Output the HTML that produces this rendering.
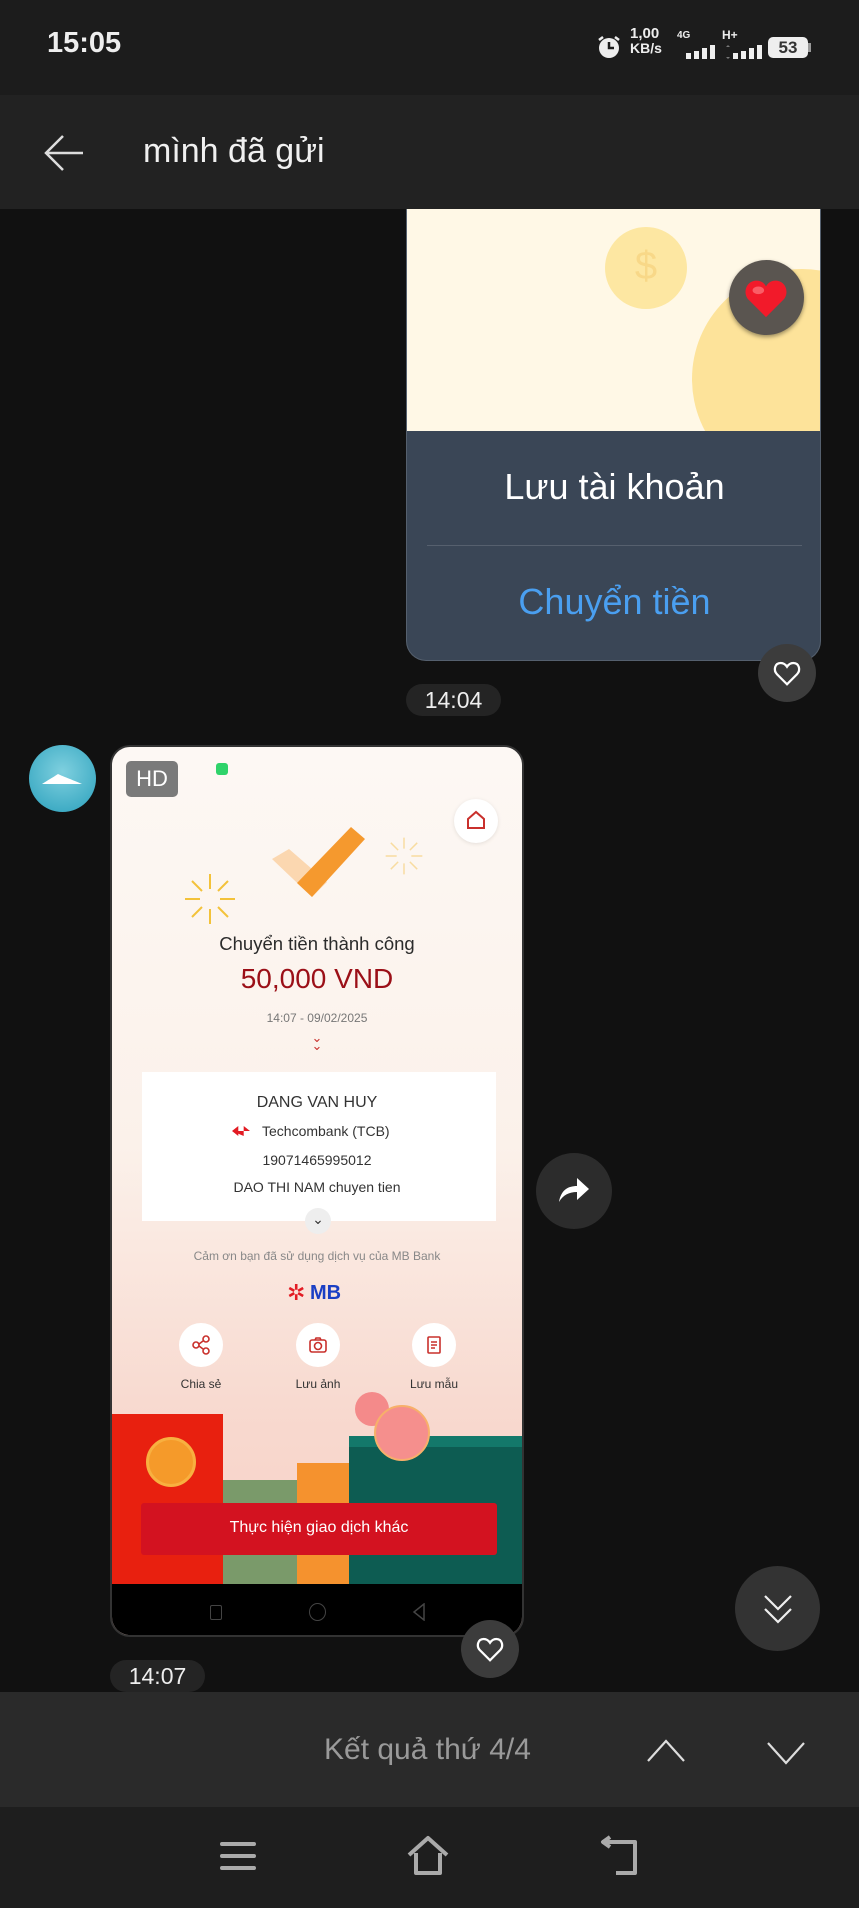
<!DOCTYPE html>
<html><head><meta charset="utf-8"><style>
*{margin:0;padding:0;box-sizing:border-box}
body{width:859px;height:1908px;background:#111;position:relative;overflow:hidden;font-family:"Liberation Sans",sans-serif}
.a{position:absolute}
.c{text-align:center}
</style></head><body>
<!-- status bar -->
<div class="a" style="left:0;top:0;width:859px;height:95px;background:#1c1c1c"></div>
<div class="a" style="left:47px;top:27px;color:#eee;font-size:29px;font-weight:bold">15:05</div>
<svg class="a" style="left:594px;top:32px" width="30" height="30" viewBox="0 0 30 30"><circle cx="15" cy="16" r="10" fill="#eee"/><path d="M15 10v6h5" stroke="#1c1c1c" stroke-width="2.5" fill="none"/><path d="M5 8l4-3M25 8l-4-3" stroke="#eee" stroke-width="2.5"/></svg>
<div class="a" style="left:630px;top:27px;color:#eee;font-size:15px;font-weight:bold;line-height:14px">1,00<br><span style="font-size:14px">KB/s</span></div>
<div class="a" style="left:677px;top:30px;color:#eee;font-size:10px;font-weight:bold">4G</div>
<svg class="a" style="left:686px;top:45px" width="32" height="14"><rect x="0" y="8" width="5" height="6" fill="#eee"/><rect x="8" y="6" width="5" height="8" fill="#eee"/><rect x="16" y="3" width="5" height="11" fill="#eee"/><rect x="24" y="0" width="5" height="14" fill="#eee"/></svg>
<div class="a" style="left:722px;top:28px;color:#eee;font-size:12px;font-weight:bold">H+</div>
<svg class="a" style="left:724px;top:45px" width="38" height="14"><path d="M2 2l2-2 2 2zM2 12l2 2 2-2z" fill="#777"/><rect x="9" y="8" width="5" height="6" fill="#eee"/><rect x="17" y="6" width="5" height="8" fill="#eee"/><rect x="25" y="3" width="5" height="11" fill="#eee"/><rect x="33" y="0" width="5" height="14" fill="#eee"/></svg>
<div class="a" style="left:768px;top:37px;width:40px;height:21px;border-radius:5px;background:#eee;color:#333;font-size:17px;font-weight:bold;line-height:21px;text-align:center">53</div>
<div class="a" style="left:808px;top:43px;width:3px;height:9px;background:#999"></div>
<!-- header -->
<div class="a" style="left:0;top:95px;width:859px;height:114px;background:#222"></div>
<svg class="a" style="left:43px;top:133px" width="42" height="40" viewBox="0 0 42 40"><path d="M40 20H4M20 3L3 20l17 17" stroke="#ddd" stroke-width="2.5" fill="none"/></svg>
<div class="a" style="left:143px;top:132px;color:#f0f0f0;font-size:34px">mình đã gửi</div>
<!-- card -->
<div class="a" style="left:406px;top:209px;width:415px;height:452px;border-radius:0 0 20px 20px;overflow:hidden;background:#3a4656;border:1px solid #55606e;border-top:none">
 <div class="a" style="left:0;top:0;width:415px;height:222px;background:#fff8e6;overflow:hidden">
  <div class="a" style="left:198px;top:18px;width:82px;height:82px;border-radius:50%;background:#fde7a2"></div>
  <div class="a c" style="left:198px;top:35px;width:82px;color:#f8d888;font-size:40px">$</div>
  <div class="a" style="left:285px;top:60px;width:220px;height:220px;border-radius:50%;background:#fde39a"></div>
 </div>
 <div class="a c" style="left:0;top:257px;width:415px;color:#fff;font-size:36px">Lưu tài khoản</div>
 <div class="a" style="left:20px;top:336px;width:375px;height:1px;background:#56606e"></div>
 <div class="a c" style="left:0;top:372px;width:415px;color:#4a9ff0;font-size:36px">Chuyển tiền</div>
</div>
<div class="a" style="left:729px;top:260px;width:75px;height:75px;border-radius:50%;background:#5a5550;box-shadow:0 2px 4px rgba(0,0,0,.4)"></div>
<svg class="a" style="left:743px;top:276px" width="46" height="44" viewBox="0 0 24 22"><path d="M12 21L3 12C0 9 1 3 6 2c3-.5 5 1 6 3 1-2 3-3.5 6-3 5 1 6 7 3 10z" fill="#f21a2a"/><ellipse cx="8" cy="7" rx="3" ry="2" fill="#ff8a90" opacity=".6"/></svg>
<div class="a" style="left:758px;top:644px;width:58px;height:58px;border-radius:50%;background:#3c3c3c"></div>
<svg class="a" style="left:772px;top:658px" width="30" height="30" viewBox="0 0 24 24"><path d="M12 21L4 13C1 10 2 4 7 4c2.5 0 4 1.5 5 3 1-1.5 2.5-3 5-3 5 0 6 6 3 9z" stroke="#fff" stroke-width="1.8" fill="none"/></svg>
<div class="a c" style="left:406px;top:684px;width:95px;height:32px;border-radius:16px;background:#242424;color:#eee;font-size:23px;line-height:32px">14:04</div>
<!-- avatar -->
<div class="a" style="left:29px;top:745px;width:67px;height:67px;border-radius:50%;background:radial-gradient(circle at 50% 40%,#7fd0df,#2aa0bc)"></div>
<svg class="a" style="left:40px;top:770px" width="44" height="16"><path d="M2 14C8 10 12 8 18 4c4 2 10 4 24 10z" fill="#fff"/></svg>
<!-- screenshot -->
<div class="a" style="left:110px;top:745px;width:414px;height:892px;border-radius:20px;overflow:hidden;background:linear-gradient(#fdf8f4 0%,#fbf1ea 45%,#f8d9cf 75%,#f7cfc4 100%);border:2px solid #333">
 <div class="a c" style="left:14px;top:14px;width:52px;height:36px;border-radius:5px;background:#7a7a7a;color:#fff;font-size:22px;line-height:36px">HD</div>
 <div class="a" style="left:104px;top:16px;width:12px;height:12px;border-radius:3px;background:#2fd36a"></div>
 <div class="a" style="left:342px;top:52px;width:44px;height:44px;border-radius:50%;background:#fff;box-shadow:0 1px 4px rgba(0,0,0,.1)"></div>
 <svg class="a" style="left:353px;top:62px" width="22" height="22" viewBox="0 0 22 22"><path d="M3 10L11 3l8 7v9H3z" stroke="#c9302c" stroke-width="2" fill="none"/></svg>
 <svg class="a" style="left:155px;top:72px" width="105" height="90" viewBox="0 0 105 90"><path d="M5 40l40 38 15-15-38-33z" fill="#fbd7b0"/><path d="M45 78L98 20 84 8 30 64z" fill="#f5992e"/></svg>
 <svg class="a" style="left:68px;top:122px" width="60" height="60" viewBox="0 0 60 60"><g stroke="#f3c23a" stroke-width="2"><path d="M30 5v15M30 40v15M5 30h15M40 30h15M12 12l10 10M38 38l10 10M48 12L38 22M22 38L12 48"/></g></svg>
 <svg class="a" style="left:270px;top:87px" width="44" height="44" viewBox="0 0 60 60"><g stroke="#f8dca0" stroke-width="2"><path d="M30 5v15M30 40v15M5 30h15M40 30h15M12 12l10 10M38 38l10 10M48 12L38 22M22 38L12 48"/></g></svg>
 <div class="a c" style="left:0;top:186px;width:410px;color:#2b2b2b;font-size:18.5px">Chuyển tiền thành công</div>
 <div class="a c" style="left:0;top:216px;width:410px;color:#9b0f17;font-size:28px">50,000 VND</div>
 <div class="a c" style="left:0;top:264px;width:410px;color:#777;font-size:12px">14:07 - 09/02/2025</div>
 <div class="a c" style="left:0;top:287px;width:410px;color:#c9302c;font-size:13px;line-height:8px">⌄<br>⌄</div>
 <div class="a" style="left:30px;top:325px;width:354px;height:149px;background:#fff"></div>
 <div class="a c" style="left:0;top:347px;width:410px;color:#333;font-size:16px">DANG VAN HUY</div>
 <div class="a" style="left:120px;top:379px;width:18px;height:10px;background:#e21b23;clip-path:polygon(0 50%,35% 0,35% 100%,0 50%,100% 50%,65% 0,65% 100%)"></div>
 <div class="a" style="left:150px;top:376px;color:#333;font-size:14px">Techcombank (TCB)</div>
 <div class="a c" style="left:0;top:405px;width:410px;color:#333;font-size:14px">19071465995012</div>
 <div class="a c" style="left:0;top:432px;width:410px;color:#333;font-size:14px">DAO THI NAM chuyen tien</div>
 <div class="a c" style="left:193px;top:461px;width:26px;height:26px;border-radius:50%;background:#eee;color:#333;font-size:14px;line-height:22px">⌄</div>
 <div class="a c" style="left:0;top:502px;width:410px;color:#888;font-size:12px">Cảm ơn bạn đã sử dụng dịch vụ của MB Bank</div>
 <div class="a" style="left:175px;top:535px;color:#e21b23;font-size:22px;line-height:22px">✲</div>
 <div class="a" style="left:198px;top:535px;color:#1b3fc4;font-size:20px;font-weight:bold">MB</div>
 <div class="a" style="left:67px;top:576px;width:44px;height:44px;border-radius:50%;background:#fff"></div>
 <div class="a" style="left:184px;top:576px;width:44px;height:44px;border-radius:50%;background:#fff"></div>
 <div class="a" style="left:300px;top:576px;width:44px;height:44px;border-radius:50%;background:#fff"></div>
 <svg class="a" style="left:78px;top:587px" width="22" height="22" viewBox="0 0 22 22" stroke="#c9302c" stroke-width="1.6" fill="none"><circle cx="6" cy="11" r="3"/><circle cx="16" cy="5" r="3"/><circle cx="16" cy="17" r="3"/><path d="M9 10l4-3M9 12l4 3"/></svg>
 <svg class="a" style="left:195px;top:587px" width="22" height="22" viewBox="0 0 22 22" stroke="#c9302c" stroke-width="1.6" fill="none"><rect x="3" y="6" width="16" height="12" rx="2"/><circle cx="11" cy="12" r="3.5"/><path d="M8 6l1-2h4l1 2"/></svg>
 <svg class="a" style="left:311px;top:587px" width="22" height="22" viewBox="0 0 22 22" stroke="#c9302c" stroke-width="1.6" fill="none"><rect x="5" y="3" width="12" height="16" rx="1"/><path d="M8 8h6M8 11h6M8 14h4"/></svg>
 <div class="a c" style="left:49px;top:630px;width:80px;color:#333;font-size:12px">Chia sẻ</div>
 <div class="a c" style="left:166px;top:630px;width:80px;color:#333;font-size:12px">Lưu ảnh</div>
 <div class="a c" style="left:282px;top:630px;width:80px;color:#333;font-size:12px">Lưu mẫu</div>
 <div class="a" style="left:0;top:667px;width:111px;height:170px;background:#e8200f"></div>
 <div class="a" style="left:34px;top:690px;width:50px;height:50px;border-radius:50%;background:#f59a2a;border:3px solid #f8b040"></div>
 <div class="a" style="left:111px;top:733px;width:74px;height:104px;background:#7a9a6a"></div>
 <div class="a" style="left:185px;top:716px;width:55px;height:121px;background:#f5922e"></div>
 <div class="a" style="left:237px;top:689px;width:175px;height:148px;background:#0d5c52"></div>
 <div class="a" style="left:237px;top:689px;width:175px;height:11px;background:#13786a"></div>
 <div class="a" style="left:243px;top:645px;width:34px;height:34px;border-radius:50%;background:#f48a8a"></div>
 <div class="a" style="left:262px;top:658px;width:56px;height:56px;border-radius:50%;background:#f58f8d;border:2px solid #f7b06a"></div>
 <div class="a" style="left:29px;top:756px;width:356px;height:52px;border-radius:3px;background:#d31220"></div>
 <div class="a c" style="left:29px;top:772px;width:356px;color:#fff;font-size:16px">Thực hiện giao dịch khác</div>
 <div class="a" style="left:0;top:837px;width:414px;height:60px;background:#000"></div>
 <div class="a" style="left:98px;top:858px;width:12px;height:15px;border:1.5px solid #444;border-radius:2px"></div>
 <div class="a" style="left:197px;top:856px;width:17px;height:18px;border:1.5px solid #444;border-radius:50%"></div>
 <svg class="a" style="left:300px;top:856px" width="14" height="18"><path d="M12 1L2 9l10 8z" stroke="#444" stroke-width="1.5" fill="none"/></svg>
</div>
<!-- forward -->
<div class="a" style="left:536px;top:1153px;width:76px;height:76px;border-radius:50%;background:#2c2c2c"></div>
<svg class="a" style="left:556px;top:1174px" width="36" height="32" viewBox="0 0 36 32"><path d="M3 28C5 16 12 12 21 12V4l12 11-12 11v-8C13 18 7 21 3 28z" fill="#fff"/></svg>
<!-- scroll down -->
<div class="a" style="left:735px;top:1566px;width:85px;height:85px;border-radius:50%;background:#333"></div>
<svg class="a" style="left:761px;top:1593px" width="34" height="32" viewBox="0 0 34 32"><path d="M4 3l13 13L30 3M4 16l13 13 13-13" stroke="#eee" stroke-width="2.2" fill="none"/></svg>
<div class="a" style="left:461px;top:1620px;width:58px;height:58px;border-radius:50%;background:#3c3c3c"></div>
<svg class="a" style="left:475px;top:1634px" width="30" height="30" viewBox="0 0 24 24"><path d="M12 21L4 13C1 10 2 4 7 4c2.5 0 4 1.5 5 3 1-1.5 2.5-3 5-3 5 0 6 6 3 9z" stroke="#fff" stroke-width="1.8" fill="none"/></svg>
<div class="a c" style="left:110px;top:1660px;width:95px;height:32px;border-radius:16px;background:#242424;color:#eee;font-size:23px;line-height:32px">14:07</div>
<!-- search bar -->
<div class="a" style="left:0;top:1692px;width:859px;height:115px;background:#2a2a2a"></div>
<div class="a" style="left:324px;top:1733px;color:#9a9a9a;font-size:30px">Kết quả thứ 4/4</div>
<svg class="a" style="left:645px;top:1738px" width="42" height="26"><path d="M3 23L21 3l18 20" stroke="#ddd" stroke-width="2.2" fill="none"/></svg>
<svg class="a" style="left:765px;top:1740px" width="42" height="26"><path d="M3 3l18 20L39 3" stroke="#ddd" stroke-width="2.2" fill="none"/></svg>
<!-- nav -->
<div class="a" style="left:0;top:1807px;width:859px;height:101px;background:#1e1e1e"></div>
<svg class="a" style="left:218px;top:1840px" width="40" height="32"><path d="M4 4h32M4 16h32M4 28h32" stroke="#aaa" stroke-width="4" stroke-linecap="round"/></svg>
<svg class="a" style="left:404px;top:1835px" width="48" height="42"><path d="M5 20L24 3l19 17M12 18v20h24V18" stroke="#aaa" stroke-width="4" fill="none" stroke-linejoin="round"/></svg>
<svg class="a" style="left:598px;top:1835px" width="44" height="42"><path d="M4 7h33v31H18M12 2L5 7l7 5" stroke="#aaa" stroke-width="4" fill="none" stroke-linejoin="round"/></svg>
</body></html>
